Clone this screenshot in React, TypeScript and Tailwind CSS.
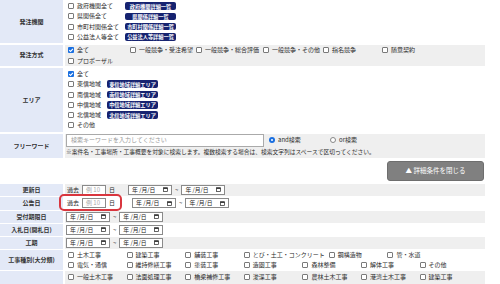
import clsx from "clsx";

const Check = ({ on }: { on?: boolean }) =>
  on ? (
    <span className="inline-flex w-[6px] h-[6px] mr-[3px] items-center justify-center rounded-[1px] bg-[#1a6fe0] shrink-0">
      <svg viewBox="0 0 10 10" className="w-[6px] h-[6px]">
        <path d="M2 5.2l2.2 2.2L8.2 3" stroke="white" strokeWidth="1.8" fill="none" />
      </svg>
    </span>
  ) : (
    <span className="inline-block w-[6px] h-[6px] mr-[3px] border border-[#7a7a7a] bg-white rounded-[1px] shrink-0" />
  );

const Radio = ({ on }: { on?: boolean }) => (
  <span
    className={clsx(
      "inline-flex w-[6px] h-[6px] mr-[3px] rounded-full items-center justify-center shrink-0",
      on ? "bg-[#1a6fe0]" : "border border-[#888] bg-white"
    )}
  >
    {on && <span className="w-[2px] h-[2px] rounded-full bg-white" />}
  </span>
);

function Item({ label, on, className }: { label: string; on?: boolean; className?: string }) {
  return (
    <span className={clsx("inline-flex items-center h-[10.3px] whitespace-nowrap", className)}>
      <Check on={on} />
      {label}
    </span>
  );
}

const Badge = ({ children }: { children: string }) => (
  <span className="inline-flex items-center justify-center h-[7.5px] w-[51px] rounded-[2px] bg-[#162370] text-white text-[5.2px] font-bold whitespace-nowrap">
    {children}
  </span>
);

const DateBox = () => (
  <span className="inline-flex items-center justify-between w-[44px] h-[10px] border border-[#8a8a8a] bg-white px-[3px] text-[5.8px] text-[#222]">
    <span>年 /月/日</span>
    <svg viewBox="0 0 10 10" className="w-[5px] h-[5px]">
      <rect x="1" y="1.5" width="8" height="7.5" fill="none" stroke="#222" strokeWidth="1.4" />
      <rect x="1" y="1.5" width="8" height="2.2" fill="#222" />
    </svg>
  </span>
);

const Range = () => (
  <span className="inline-flex items-center">
    <DateBox />
    <span className="mx-[3px]">~</span>
    <DateBox />
  </span>
);

const Past = () => (
  <span className="inline-flex items-center">
    <span>過去</span>
    <span className="inline-flex items-center w-[24px] h-[10px] ml-[3px] border border-[#8a8a8a] bg-white px-[3px] text-[#aaa]">
      例 10
    </span>
    <span className="ml-[3px]">日</span>
  </span>
);

function Label({ children, className }: { children: string; className?: string }) {
  return (
    <div className={clsx("flex items-center justify-center bg-[#e3e9f7] font-bold text-[#333]", className)}>
      {children}
    </div>
  );
}

const agencies = [
  ["政府機関全て", "政府機関詳細一覧"],
  ["県関係全て", "県関係詳細一覧"],
  ["市町村関係全て", "市町村関係詳細一覧"],
  ["公益法人等全て", "公益法人等詳細一覧"],
];

const methods = [
  { label: "全て", on: true, w: "w-[62px]" },
  { label: "一般競争・受注希望", w: "w-[66px]" },
  { label: "一般競争・総合評価", w: "w-[67px]" },
  { label: "一般競争・その他", w: "w-[60px]" },
  { label: "指名競争", w: "w-[59px]" },
  { label: "随意契約", w: "w-[59px]" },
  { label: "プロポーザル", w: "w-[62px]" },
];

const areas = ["東信地域", "南信地域", "中信地域", "北信地域"];

const majorKinds = [
  "土木工事", "建築工事", "舗装工事", "とび・土工・コンクリート", "鋼構造物", "管・水道",
  "電気・通信", "維持修繕工事", "塗装工事", "造園工事", "森林整備", "解体工事", "その他",
];

const minorKinds = [
  "一般土木工事", "法面処理工事", "橋梁補修工事", "浚渫工事", "農林土木工事", "港湾土木工事", "建築工事",
  "木造建築工事", "プレハブ建築工事", "鉄骨建築工事", "アスファルト工事", "セメント・コンクリート舗装工事",
];

export default function App() {
  return (
    <div className="w-[500px] h-[284px] overflow-hidden bg-white font-['Noto_Sans_CJK_JP',sans-serif] text-[6px] text-[#2a2a2a] leading-none">
      <div className="w-[485px]">
        {/* upper table */}
        <div className="grid grid-cols-[63px_420px] gap-x-[2px] gap-y-[2px]">
          <Label>発注機関</Label>
          <div className="flex flex-col pl-[3px] pt-[1px] pb-[1px]">
            {agencies.map(([a, b]) => (
              <div key={a} className="flex items-center h-[10.3px]">
                <Item label={a} className="w-[57px]" />
                <Badge>{b}</Badge>
              </div>
            ))}
          </div>

          <Label>発注方式</Label>
          <div className="flex flex-wrap pl-[3px] bg-[#efefef]">
            {methods.map((m) => (
              <Item key={m.label} label={m.label} on={m.on} className={m.w} />
            ))}
          </div>

          <Label>エリア</Label>
          <div className="flex flex-col pl-[3px] py-[1px]">
            <Item label="全て" on />
            {areas.map((a) => (
              <div key={a} className="flex items-center h-[10.3px]">
                <Item label={a} className="w-[39px]" />
                <Badge>{a + "詳細エリア"}</Badge>
              </div>
            ))}
            <Item label="その他" />
          </div>

          <Label>フリーワード</Label>
          <div className="flex flex-col bg-[#efefef] pl-[1px] pb-[1px]">
            <div className="flex items-center">
              <div className="flex items-center w-[198px] h-[13px] border border-[#aaa] bg-white px-[4px] text-[#999]">
                検索キーワードを入力してください
              </div>
              <span className="inline-flex items-center ml-[5px] w-[61px]">
                <Radio on />
                and検索
              </span>
              <span className="inline-flex items-center">
                <Radio />
                or検索
              </span>
            </div>
            <div className="h-[10px] flex items-center text-[5.75px]">
              ※案件名・工事場所・工事概要を対象に検索します。複数検索する場合は、検索文字列はスペースで区切ってください。
            </div>
          </div>
        </div>

        {/* toggle button */}
        <div className="flex justify-end mt-[3px] mb-[3px] pr-[1px]">
          <button className="w-[97px] h-[20px] rounded-[3px] bg-[#808080] border border-[#6e6e6e] text-white text-[6.5px]">
            ▲ 詳細条件を閉じる
          </button>
        </div>

        {/* lower table */}
        <div className="grid grid-cols-[63px_420px] gap-x-[2px] gap-y-[1px]">
          <Label className="h-[12px]">更新日</Label>
          <div className="flex items-center bg-[#efefef] pl-[2px]">
            <Past />
            <span className="ml-[13px]">
              <Range />
            </span>
          </div>

          <Label className="h-[13px]">公告日</Label>
          <div className="flex items-center pl-[2px]">
            <span className="relative inline-flex">
              <Past />
              <span className="absolute left-[-8px] right-[-7px] top-[-4px] bottom-[-3px] border-2 border-[#d9363e] rounded-[5px]" />
            </span>
            <span className="ml-[17px]">
              <Range />
            </span>
          </div>

          <Label className="h-[12px]">受付期限日</Label>
          <div className="flex items-center bg-[#efefef] pl-[1px]">
            <Range />
          </div>

          <Label className="h-[12px]">入札日(開札日)</Label>
          <div className="flex items-center pl-[1px]">
            <Range />
          </div>

          <Label className="h-[12px]">工期</Label>
          <div className="flex items-center bg-[#efefef] pl-[1px]">
            <Range />
          </div>

          <Label>工事種別(大分類)</Label>
          <div className="flex flex-wrap pl-[3px]">
            {majorKinds.map((k) => (
              <Item key={k} label={k} className="min-w-[58.6px] pr-[4px]" />
            ))}
          </div>

          <Label className="h-[60px]">工事種別(中分類)</Label>
          <div className="flex flex-wrap content-start bg-[#efefef] pl-[3px] pt-[1px]">
            {minorKinds.map((k) => (
              <Item key={k} label={k} className="min-w-[58.6px] pr-[4px]" />
            ))}
          </div>
        </div>
      </div>
    </div>
  );
}
